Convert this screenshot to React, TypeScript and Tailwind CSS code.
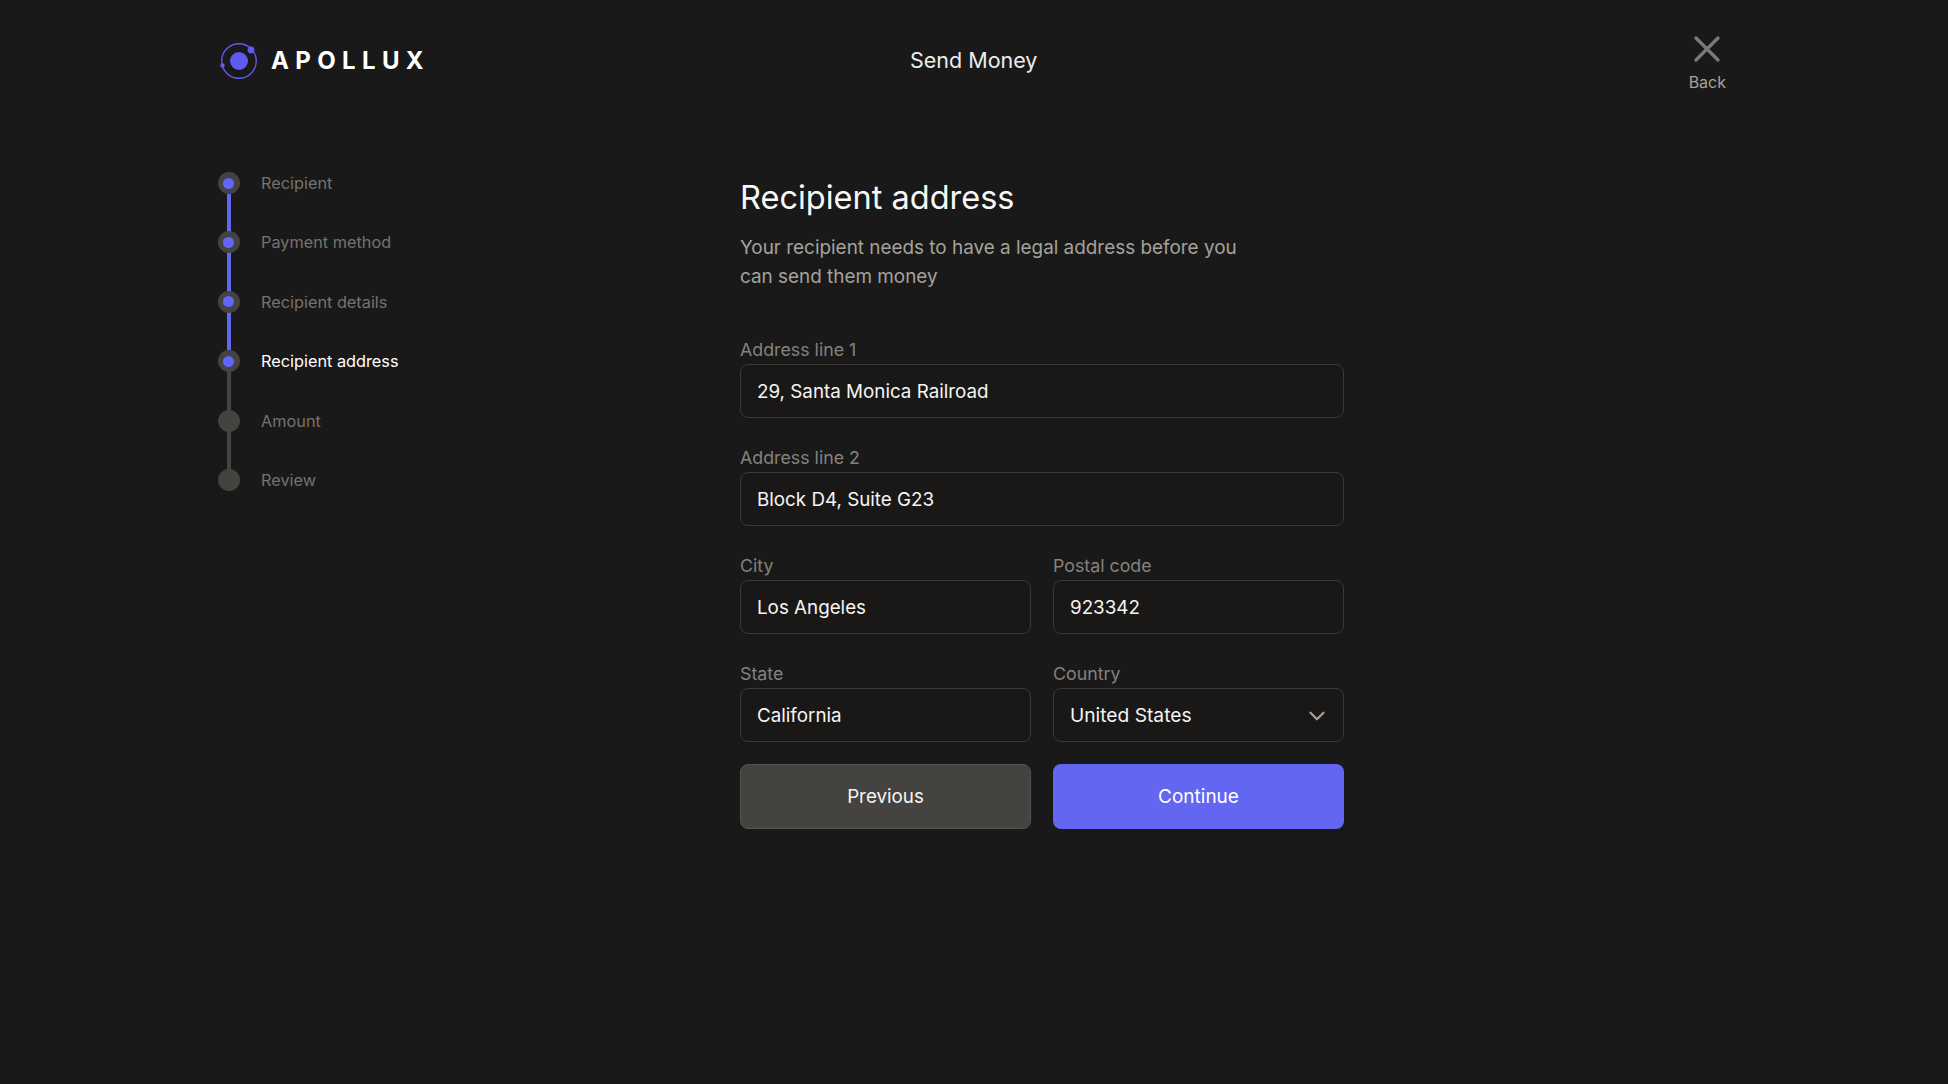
import { ChevronDown } from "lucide-react";

const steps = [
  { label: "Recipient", done: true, color: "text-[#75726e]" },
  { label: "Payment method", done: true, color: "text-[#75726e]" },
  { label: "Recipient details", done: true, color: "text-[#75726e]" },
  { label: "Recipient address", done: true, color: "text-white" },
  { label: "Amount", done: false, color: "text-[#75726e]" },
  { label: "Review", done: false, color: "text-[#75726e]" },
];

function Logo() {
  return (
    <div className="flex items-center gap-[13px]">
      <svg width="38" height="38" viewBox="0 0 38 38" fill="none">
        <circle cx="19" cy="19" r="17.3" stroke="#5f5bee" strokeWidth="1.4" />
        <circle cx="19" cy="19" r="9" fill="#5f5bee" />
        <circle cx="31" cy="8" r="3.4" fill="#5f5bee" />
        <circle cx="2.5" cy="23.5" r="2.2" fill="#5f5bee" />
      </svg>
      <span className="text-[24px] leading-none font-bold tracking-[0.265em] text-white whitespace-nowrap">APOLLUX</span>
    </div>
  );
}

function Step({ label, done, color, index }: { label: string; done: boolean; color: string; index: number }) {
  const showLine = index < steps.length - 1;
  return (
    <div className="relative flex h-[59.4px] items-start">
      {showLine && (
        <div className={`absolute left-[9px] top-[11px] h-[60px] w-1 ${index < 3 ? "bg-[#6366f1]" : "bg-[#45433f]"}`} />
      )}
      <div className="relative flex h-[22px] w-[22px] items-center justify-center rounded-full bg-[#45433f]">
        {done && <div className="h-[11px] w-[11px] rounded-full bg-[#6366f9]" />}
      </div>
      <span className={`ml-[21.5px] text-[16.3px] leading-[22px] ${color}`}>{label}</span>
    </div>
  );
}

function Field({ label, value, className = "" }: { label: string; value: string; className?: string }) {
  return (
    <div className={`flex flex-col ${className}`}>
      <label className="text-[17.8px] leading-[22px] mb-[3px] text-[#85827c]">{label}</label>
      <div className="flex h-[54px] items-center rounded-[8px] border border-[#3b3937] bg-[#1a1817] px-4 pt-[2px] text-[18.8px] text-[#f5f5f4]">
        {value}
      </div>
    </div>
  );
}

export default function App() {
  return (
    <div className="min-h-[1084px] bg-[#1a1919] font-['Inter',sans-serif] text-white">
      <header className="flex h-[122px] items-start pl-[220px] pr-[222px]">
        <div className="mt-[42px] w-[400px] flex-none"><Logo /></div>
        <h1 className="mt-[45px] flex-1 pl-[290px] text-[21.5px] leading-[30px] text-[#ececeb]">Send Money</h1>
        <button className="mt-[34px] flex flex-col items-center text-[#a5a29d]">
          <svg width="30" height="30" viewBox="0 0 30 30" fill="none" stroke="#7b7976" strokeWidth="3.4" strokeLinecap="round">
            <path d="M4 4 L26 26 M26 4 L4 26" />
          </svg>
          <span className="mt-[7px] text-[16px] leading-[22px]">Back</span>
        </button>
      </header>

      <main className="flex items-start pl-[217.5px]">
        <nav className="mt-[50px] w-[522.5px] flex-none">
          {steps.map((s, i) => (
            <Step key={s.label} {...s} index={i} />
          ))}
        </nav>
        <section className="w-[604px] flex-none">
          <h2 className="mt-[54px] text-[32.5px] leading-[44px] text-[#f7f7f6]">Recipient address</h2>
          <p className="mt-[12.5px] w-[520px] text-[18.9px] leading-[29px] text-[#a5a29c]">
            Your recipient needs to have a legal address before you can send them money
          </p>
          <div className="mt-[48.5px] flex flex-col gap-[29px]">
            <Field label="Address line 1" value="29, Santa Monica Railroad" />
            <Field label="Address line 2" value="Block D4, Suite G23" />
            <div className="grid grid-cols-2 gap-[22px]">
              <Field label="City" value="Los Angeles" />
              <Field label="Postal code" value="923342" />
            </div>
            <div className="grid grid-cols-2 gap-[22px]">
              <Field label="State" value="California" />
              <div className="flex flex-col">
                <label className="text-[17.8px] leading-[22px] mb-[3px] text-[#85827c]">Country</label>
                <div className="flex h-[54px] items-center justify-between rounded-[8px] border border-[#3b3937] bg-[#1a1817] px-4 pt-[1px] text-[19.2px] text-[#f5f5f4]">
                  United States
                  <ChevronDown size={26} className="-mr-[3px] text-[#a5a29d]" />
                </div>
              </div>
            </div>
          </div>
          <div className="mt-[22px] grid grid-cols-2 gap-[22px]">
            <button className="h-[65px] rounded-[8px] border border-[#565451] bg-[#45433f] pt-[1px] text-[18.8px] text-[#f5f5f4]">Previous</button>
            <button className="h-[65px] rounded-[8px] bg-[#6366f1] pt-[1px] text-[19px] text-white">Continue</button>
          </div>
        </section>
      </main>
    </div>
  );
}
